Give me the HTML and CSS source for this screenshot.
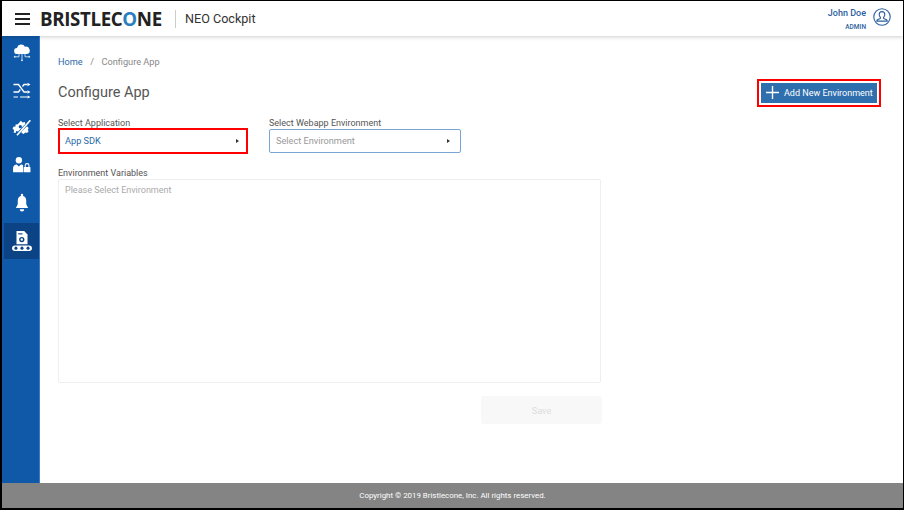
FILE: index.html
```html
<!DOCTYPE html>
<html lang="en">
<head>
<meta charset="utf-8">
<title>Configure App</title>
<link rel="stylesheet" href="styles.css">
</head>
<body>
<div class="frame">
  <header class="topbar">
    <div class="burger"><span></span><span></span><span></span></div>
    <div class="logo">BRISTLEC<span class="logo-o">O</span>NE</div>
    <div class="product">NEO Cockpit</div>
    <div class="user">
      <div class="user-text">
        <div class="user-name">John Doe</div>
        <div class="user-role">ADMIN</div>
      </div>
      <svg class="avatar" viewBox="0 0 18 18" width="18" height="18" fill="none" stroke="#2a5f9e" stroke-width="1.100">
        <circle cx="9" cy="9" r="8.200"/>
        <path d="M9 3.600c-1.800 0-2.800 1.300-2.800 3 0 1.200.5 2.200 1.200 2.800v1l-3 1.400c-.5.3-.6.7-.6 1.300h10.400c0-.6-.1-1-.6-1.300l-3-1.400v-1c.7-.6 1.200-1.600 1.200-2.800 0-1.700-1-3-2.800-3z"/>
      </svg>
    </div>
  </header>
  <div class="middle">
    <nav class="sidebar">
      <div class="nav-item">
        <svg viewBox="0 0 18 18" width="18" height="18" fill="#fff" stroke="none">
          <path d="M4.300 10a3 3 0 0 1-.3-6 4.300 4.300 0 0 1 8-1.200A3.600 3.600 0 0 1 14 10z"/>
          <path d="M9 10v5.500M6 10v2.800H2.500M12 10v2.800h3.500" stroke="#cfe0f3" stroke-width=".9" fill="none"/>
          <circle cx="1.800" cy="12.800" r="1" fill="#cfe0f3"/>
          <circle cx="16.200" cy="12.800" r="1" fill="#cfe0f3"/>
          <circle cx="9" cy="16.300" r="1" fill="#cfe0f3"/>
        </svg>
      </div>
      <div class="nav-item">
        <svg viewBox="0 0 18 18" width="18" height="18" fill="none" stroke="#fff" stroke-width="1.300">
          <path d="M.5 2.500h5l5.500 7.500h3.500M.5 10h5l1.800-2.500M9.500 4.500l1.500-2h3.500"/>
          <path d="M14.500.8l3 1.700-3 1.700zM14.500 8.300l3 1.700-3 1.700z" fill="#fff" stroke="none"/>
          <path d="M.5 15H5M7 15h7.500" stroke-width="1.200"/>
          <path d="M14.500 13.400l3 1.600-3 1.600z" fill="#fff" stroke="none"/>
        </svg>
      </div>
      <div class="nav-item">
        <svg viewBox="0 0 18 18" width="20" height="20" fill="#fff">
          <path d="M8 2.500l1.500 1.500 2-.3.500 1.600-6.500 6.800-1.800-.5-.3 1.900-2-.5.5-2L.5 9.500l1-1.800 1.500.2.300-2 1.900-.2z"/>
          <path d="M4.500 15.500L16.500 2" stroke="#fff" stroke-width="1.500" fill="none"/>
          <path d="M13.500 7.500l1.500 1.500-.8 1.500.8 1.500-1.500 1.600-1.500-.5-1.500 1.300-1.800-.8-.2-1.400z"/>
          <circle cx="7.500" cy="7.800" r="1.500" fill="#1059a8"/>
        </svg>
      </div>
      <div class="nav-item">
        <svg viewBox="0 0 18 18" width="19" height="19" fill="#fff">
          <circle cx="6.500" cy="4" r="3"/>
          <path d="M1 15.500v-4c0-2 1.500-3.500 3.500-3.500L6.500 10l2-2c1 0 1.500.3 2 .8V15.500z"/>
          <rect x="11" y="10.500" width="6.500" height="5" rx=".6"/>
          <path d="M12.500 10.500V9a1.800 1.800 0 0 1 3.600 0v1.500" fill="none" stroke="#fff" stroke-width="1"/>
        </svg>
      </div>
      <div class="nav-item">
        <svg viewBox="0 0 18 18" width="20" height="20" fill="#fff">
          <circle cx="9" cy="1.800" r="1.100"/>
          <path d="M9 2.500c-2.600 0-3.800 2-3.800 4.300v3.400L3.500 13.500h11l-1.700-3.300V6.800c0-2.300-1.200-4.300-3.800-4.300z"/>
          <path d="M7 14.700h4a2 2 0 0 1-4 0z"/>
        </svg>
      </div>
      <div class="nav-item nav-active">
        <svg viewBox="0 0 20 20" width="22" height="22" fill="#fff">
          <path d="M5 1h7l3 3v9H5z"/>
          <circle cx="9.800" cy="8.700" r="2.400" fill="#0c4385"/>
          <circle cx="9.800" cy="8.700" r="1.100"/>
          <path d="M6.500 3h4v1h-4z" fill="#0c4385"/>
          <rect x="1" y="14" width="18" height="5" rx="2.500"/>
          <circle cx="4.500" cy="16.500" r="1.400" fill="#0c4385"/>
          <circle cx="10" cy="16.500" r="1.400" fill="#0c4385"/>
          <circle cx="15.500" cy="16.500" r="1.400" fill="#0c4385"/>
        </svg>
      </div>
    </nav>
    <main class="content">
      <div class="crumbs"><a class="crumb-link">Home</a><span class="crumb-sep">/</span><span>Configure App</span></div>
      <div class="title-row">
        <h1 class="title">Configure App</h1>
        <div class="highlight add-wrap">
          <button class="add-btn">
            <svg class="plus" viewBox="0 0 14 14" width="13" height="13" stroke="#fff" stroke-width="1.500"><path d="M7 0v14M0 7h14"/></svg>
            Add New Environment
          </button>
        </div>
      </div>
      <div class="form">
        <div class="selects">
          <div class="field field-app">
            <label class="label">Select Application</label>
            <div class="select select-hl"><span class="val">App SDK</span><i class="caret"></i></div>
          </div>
          <div class="field field-env">
            <label class="label">Select Webapp Environment</label>
            <div class="select select-blue"><span class="ph">Select Environment</span><i class="caret"></i></div>
          </div>
        </div>
        <label class="label label-vars">Environment Variables</label>
        <div class="vars">Please Select Environment</div>
        <div class="actions"><button class="save">Save</button></div>
      </div>
    </main>
  </div>
  <footer class="footer">Copyright © 2019 Bristlecone, Inc. All rights reserved.</footer>
</div>
</body>
</html>
```
FILE: styles.css
```css
* { box-sizing: border-box; }
html, body { margin: 0; height: 100%; }
body { font-family: Roboto, "Liberation Sans", sans-serif; background: #fff; color: #555; }
.frame { width: 904px; height: 510px; border: 2px solid #000; border-top-width: 1px; border-right-width: 1px; display: flex; flex-direction: column; overflow: hidden; }
.topbar { height: 35px; flex: none; display: flex; align-items: center; background: #fff; box-shadow: 0 1px 4px rgba(0,0,0,.2); position: relative; z-index: 2; padding-left: 13px; }
.burger { width: 15px; display: flex; flex-direction: column; gap: 3px; margin-right: 11px; }
.burger span { height: 2px; background: #222; }
.logo { font-family: "Open Sans", sans-serif; font-weight: 700; font-size: 18.700px; color: #222; letter-spacing: -.35px; width: 127px; white-space: nowrap; margin-left: -1px; }
.logo-o { color: #2a7fc0; }
.product { border-left: 1px solid #ccc; height: 18px; line-height: 18px; padding-left: 9px; font-size: 12.600px; color: #333; margin-left: 8px; }
.user { margin-left: auto; display: flex; align-items: center; padding-right: 12px; }
.user-text { text-align: right; margin-right: 7px; margin-top: 2px; }
.user-name { font-size: 9px; line-height: 11px; font-weight: 500; color: #2a5f9e; }
.user-role { font-size: 6.500px; line-height: 8px; margin-top: 4px; font-weight: 500; color: #2a5f9e; }
.avatar { margin-top: -3px; }
.middle { flex: 1; display: flex; min-height: 0; }
.sidebar { width: 38px; flex: none; background: #1059a8; border-right: 1px solid #3a7bc4; padding-left: 2px; }
.nav-item { height: 36px; margin-bottom: 1.600px; display: flex; align-items: center; justify-content: center; }
.nav-item:first-child { margin-top: -1px; }
.nav-active { background: #0c4385; }
.content { flex: 1; padding: 20px 0 0 18px; min-width: 0; }
.crumbs { font-size: 9.200px; line-height: 12px; color: #888; }
.crumb-link { color: #2a6aa8; }
.crumb-sep { margin: 0 7.500px; }
.title-row { display: flex; justify-content: space-between; align-items: flex-start; margin-top: 11px; padding-right: 22px; }
.title { margin: 5px 0 0; font-size: 14.500px; line-height: 18px; font-weight: 400; color: #555; }
.highlight { border: 2px solid #f00; }
.add-wrap { padding: 2px; }
.add-btn { width: 116px; height: 20px; border: 0; background: #2f6fad; color: #fff; font-family: inherit; font-size: 9px; display: flex; align-items: center; padding: 0 0 1px 5px; white-space: nowrap; }
.plus { margin-right: 5px; }
.form { width: 544px; margin-top: 11px; }
.selects { display: flex; gap: 21px; }
.field-app { width: 190px; }
.field-env { width: 192px; }
.label { display: block; font-size: 9px; line-height: 10px; color: #555; }
.select { height: 24px; display: flex; align-items: center; justify-content: space-between; padding: 0 10px 1px 6px; font-size: 9.200px; background: #fff; margin-top: 1px; }
.select-hl { border: 2px solid #f00; padding-left: 5px; padding-right: 7px; margin-top: 0; height: 26px; }
.select-blue { border: 1px solid #7aa5d2; border-radius: 2px; }
.val { color: #2a6aa8; }
.ph { color: #999; }
.caret { width: 0; height: 0; border-left: 3px solid #333; border-top: 2px solid transparent; border-bottom: 2px solid transparent; }
.label-vars { margin-top: 14px; }
.vars { height: 204px; border: 1px solid #eee; border-radius: 2px; margin-top: 1px; padding: 5px 6px; font-size: 9px; line-height: 11px; color: #aaa; width: 543px; }
.actions { display: flex; justify-content: flex-end; margin-top: 13px; }
.save { width: 121px; height: 28px; border: 0; border-radius: 3px; background: #f8f8f8; color: #ddd; font-family: inherit; font-size: 9.200px; }
.footer { height: 25px; flex: none; background: #848484; color: #fff; font-size: 7.900px; display: flex; align-items: center; justify-content: center; }
```
